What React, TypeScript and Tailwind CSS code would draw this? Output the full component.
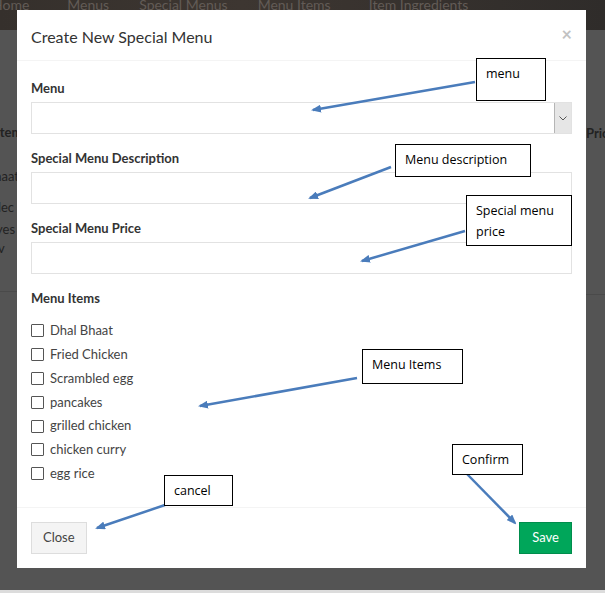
import React from "react"

const menuItems = [
  "Dhal Bhaat",
  "Fried Chicken",
  "Scrambled egg",
  "pancakes",
  "grilled chicken",
  "chicken curry",
  "egg rice",
]

// callout boxes drawn over the screenshot
const notes = [
  { id: "menu", lines: ["menu"], cls: "left-[476px] top-[58px] w-[70px] h-[43px]" },
  { id: "desc", lines: ["Menu description"], cls: "left-[395px] top-[144px] w-[136px] h-[33px]" },
  { id: "price", lines: ["Special menu", "price"], cls: "left-[466px] top-[195px] w-[106px] h-[51px]" },
  { id: "items", lines: ["Menu Items"], cls: "left-[362px] top-[349px] w-[101px] h-[35px]" },
  { id: "confirm", lines: ["Confirm"], cls: "left-[452px] top-[444px] w-[71px] h-[31px]" },
  { id: "cancel", lines: ["cancel"], cls: "left-[164px] top-[475px] w-[69px] h-[31px]" },
]

const arrows = [
  { x1: 475, y1: 82, x2: 313, y2: 110 },
  { x1: 391, y1: 167, x2: 310, y2: 198 },
  { x1: 465, y1: 231, x2: 362, y2: 261 },
  { x1: 357, y1: 378, x2: 200, y2: 406 },
  { x1: 165, y1: 505, x2: 97, y2: 528 },
  { x1: 467, y1: 474, x2: 515, y2: 523 },
]

function Field({ label, select }: { label: string; select?: boolean }) {
  return (
    <div className="mb-[15px]">
      <div className="text-[13px] font-bold leading-[18px] text-[#333] mb-[5px]">{label}</div>
      <div className="relative h-[32px] border border-[#e2e2e2] bg-white">
        {select && (
          <div className="absolute right-0 top-0 h-[30px] w-[17px] bg-[#e6e6e6] border-l border-[#b5b5b5] flex items-center justify-center">
            <svg width="8" height="5" viewBox="0 0 8 5">
              <path d="M0.5 0.5 L4 4 L7.5 0.5" fill="none" stroke="#555" strokeWidth="1" />
            </svg>
          </div>
        )}
      </div>
    </div>
  )
}

export default function App() {
  return (
    <div className="relative w-[605px] h-[593px] overflow-hidden bg-[#545454] font-['Lato',sans-serif]">
      {/* page behind the overlay */}
      <div className="h-[30px] bg-[linear-gradient(90deg,#35302c,#3d3631_40%,#2f2c2a)] flex gap-[30px] text-[14px] leading-[10px] text-[#625b56] whitespace-nowrap">
        <span className="-ml-[8px]">Home</span>
        <span className="ml-[8px]">Menus</span>
        <span>Special Menus</span>
        <span>Menu Items</span>
        <span className="ml-[8px]">Item Ingredients</span>
      </div>
      <div className="flex justify-between">
        <div className="w-[17px] overflow-hidden text-[13px] text-[#222] whitespace-nowrap flex flex-col">
          <span className="mt-[93px] font-bold -ml-[4px]">Item</span>
          <span className="mt-[24px] -ml-[14px]">Bhaat</span>
          <span className="mt-[12px] -ml-[16px]">Selec</span>
          <span className="mt-[2px] -ml-[4px]">yes</span>
          <span className="-ml-[2px]">v</span>
          <div className="mt-[32px] h-px bg-[#4a4a4a]" />
        </div>
        <div className="w-[19px] overflow-hidden text-[13px] font-bold text-[#222] whitespace-nowrap flex flex-col">
          <span className="mt-[94px]">Price</span>
          <div className="mt-[150px] h-px bg-[#4a4a4a]" />
        </div>
      </div>
      <div className="absolute left-0 right-0 bottom-0 h-[3px] bg-[#dcdcdc]" />

      {/* modal */}
      <div className="absolute left-[17px] top-[10px] w-[569px] h-[558px] bg-white flex flex-col text-[#333]">
        <div className="h-[51px] px-[14px] flex items-center justify-between border-b border-[#f4f4f4]">
          <span className="text-[16px] text-[#333] pt-[3px]">Create New Special Menu</span>
          <span className="text-[18px] text-[#c2c2c2] font-bold -mt-[2px]">×</span>
        </div>
        <div className="px-[14px] pt-[18px] flex-1">
          <Field label="Menu" select />
          <Field label="Special Menu Description" />
          <Field label="Special Menu Price" />
          <div className="text-[13px] font-bold leading-[18px] text-[#333]">Menu Items</div>
          <div className="mt-[12px] flex flex-col">
            {menuItems.map((item) => (
              <label key={item} className="h-[23.8px] flex items-center gap-[6px] text-[13px] text-[#444]">
                <span className="w-[13px] h-[13px] border border-[#555] bg-white rounded-[1px]" />
                {item}
              </label>
            ))}
          </div>
        </div>
        <div className="h-[61px] px-[14px] flex items-center justify-between border-t border-[#f4f4f4]">
          <button className="h-[32px] px-[11px] bg-[#f4f4f4] border border-[#ddd] text-[13px] text-[#444]">Close</button>
          <button className="h-[32px] px-[12px] bg-[#00a65a] border border-[#008d4c] text-[13px] text-white">Save</button>
        </div>
      </div>

      {/* annotation arrows */}
      <svg className="absolute inset-0 pointer-events-none" width="605" height="593">
        <defs>
          <marker id="head" markerWidth="10" markerHeight="8" refX="8" refY="4" orient="auto" markerUnits="userSpaceOnUse">
            <path d="M0 0 L10 4 L0 8 Z" fill="#4a7cbb" />
          </marker>
        </defs>
        {arrows.map((a, i) => (
          <line key={i} x1={a.x1} y1={a.y1} x2={a.x2} y2={a.y2} stroke="#4a7cbb" strokeWidth="2.5" markerEnd="url(#head)" />
        ))}
      </svg>

      {/* annotation boxes */}
      {notes.map((n) => (
        <div key={n.id} className={`absolute border border-black bg-white px-[9px] pt-[4px] font-['Open_Sans',sans-serif] text-[12.5px] leading-[21px] text-black ${n.cls}`}>
          {n.lines.map((l) => (
            <div key={l}>{l}</div>
          ))}
        </div>
      ))}
    </div>
  )
}
